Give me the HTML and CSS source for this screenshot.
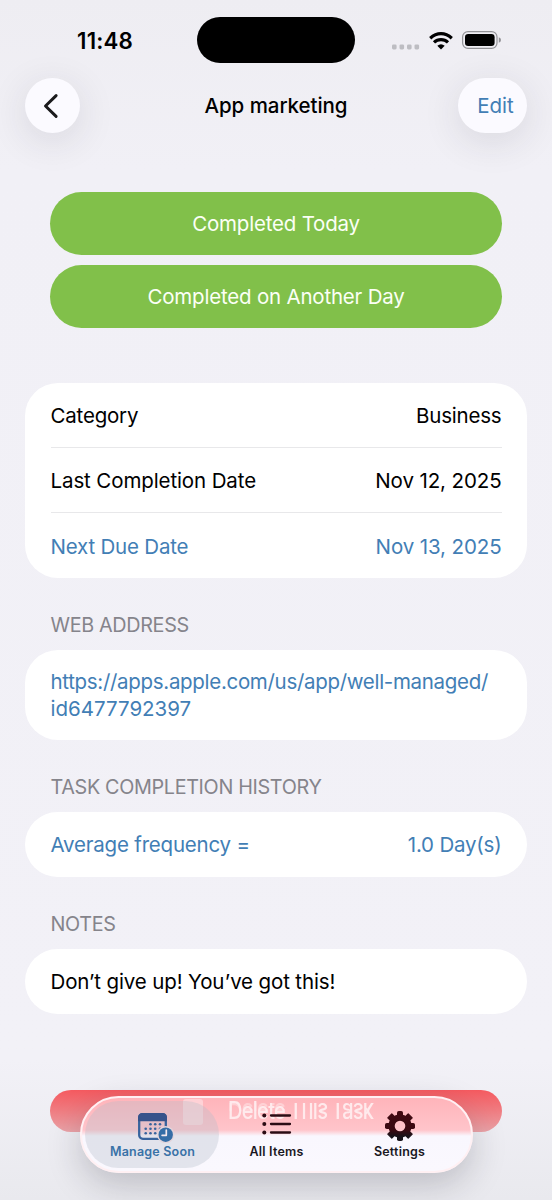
FILE: index.html
```html
<!DOCTYPE html>
<html lang="en">
<head>
<meta charset="utf-8">
<title>App marketing</title>
<link rel="stylesheet" href="styles.css">
</head>
<body>
<div class="screen">
  <div class="status">
    <span class="time">11:48</span>
    <div class="island"></div>
    <div class="indicators">
      <svg class="signal" width="28" height="6" viewBox="0 0 28 6" fill="#bdbdc2"><rect x="0" y=".4" width="4.6" height="5" rx="1.4"/><rect x="7.5" y=".4" width="4.6" height="5" rx="1.4"/><rect x="15" y=".4" width="4.6" height="5" rx="1.4"/><rect x="22.5" y=".4" width="4.6" height="5" rx="1.4"/></svg>
      <svg class="wifi" width="24" height="18" viewBox="0 0 24 18"><g fill="none" stroke="#000" stroke-width="3.2"><path d="M1.2 6.2Q6.2 1.7 12 1.7T22.8 6.2"/><path d="M5 10.4Q8 7.6 12 7.6T19 10.4"/></g><path d="M8.3 13.8Q12 10.8 15.7 13.8L12 17.6Z"/></svg>
      <svg class="battery" width="40" height="18" viewBox="0 0 40 18"><rect x=".6" y=".6" width="34.4" height="16.8" rx="5.4" fill="none" stroke="#929296" stroke-width="1.2"/><rect x="3" y="3" width="29.6" height="12" rx="3.2"/><path d="M36.8 6.2Q39 7 39 9T36.8 11.8Z" fill="#929296"/></svg>
    </div>
  </div>
  <header class="nav">
    <button class="glass back" aria-label="Back"><svg width="16" height="26" viewBox="0 0 16 26" fill="none" stroke="#1a1a1c" stroke-width="3" stroke-linecap="round" stroke-linejoin="round"><path d="M13.1 2.6 2.5 13 13.1 23.4"/></svg></button>
    <h1 class="title">App marketing</h1>
    <button class="glass edit"><span>Edit</span></button>
  </header>
  <main class="content">
    <div class="actions">
      <button class="done">Completed Today</button>
      <button class="done">Completed on Another Day</button>
    </div>
    <section class="card details">
      <div class="row"><span>Category</span><span>Business</span></div>
      <div class="row"><span class="wide">Last Completion Date</span><span class="wide">Nov 12, 2025</span></div>
      <div class="row blue"><span>Next Due Date</span><span class="wide">Nov 13, 2025</span></div>
    </section>
    <h2 class="label">WEB ADDRESS</h2>
    <section class="card web blue"><a class="url">https://apps.apple.com/us/app/well-managed/<br><span class="digits">id6477792397</span></a></section>
    <h2 class="label">TASK COMPLETION HISTORY</h2>
    <section class="card"><div class="row blue"><span>Average frequency =</span><span>1.0 Day(s)</span></div></section>
    <h2 class="label">NOTES</h2>
    <section class="card"><div class="row"><span class="note">Don’t give up! You’ve got this!</span></div></section>
    <div class="delete"></div>
  </main>
  <nav class="tabs">
    <div class="ghost">
      <i class="ghost-icon"></i>
      <div class="ghost-text">
        <span class="word whole" data-word="Delete"><span>Delete</span></span>
        <span class="word" data-word="This"><span>This</span></span>
        <span class="word" data-word="Task"><span>Task</span></span>
      </div>
    </div>
    <div class="tab active">
      <svg class="calendar" width="37" height="30" viewBox="0 0 37 30"><rect x="1.2" y="1.2" width="26.6" height="24.6" rx="3.6" fill="none" stroke="#37639d" stroke-width="2.3"/><path d="M0 8.3V4.5Q0 0 4.5 0h20Q29 0 29 4.5v3.8Z" fill="#36538b"/><g fill="#37639d"><circle cx="12.5" cy="11.2" r="1.3"/><circle cx="17.2" cy="11.2" r="1.3"/><circle cx="22" cy="11.2" r="1.3"/><circle cx="7.7" cy="15.7" r="1.3"/><circle cx="12.5" cy="15.7" r="1.3"/><circle cx="17.2" cy="15.7" r="1.3"/><circle cx="22" cy="15.7" r="1.3"/><circle cx="7.7" cy="20.3" r="1.3"/><circle cx="12.5" cy="20.3" r="1.3"/><circle cx="17.2" cy="20.3" r="1.3"/></g><circle cx="27.7" cy="21.7" r="8.6" fill="#e3d5dc"/><circle cx="27.7" cy="21.7" r="7.2" fill="#356da6"/><path d="M28.3 17v5.3h-4.2" fill="none" stroke="#f3e8ed" stroke-width="1.7" stroke-linecap="round" stroke-linejoin="round"/></svg>
      <span>Manage Soon</span>
    </div>
    <div class="tab">
      <svg width="30" height="30" viewBox="0 0 30 30"><g stroke="#2b0c14" stroke-width="2.3" stroke-linecap="round"><path d="M9 4.5h19M9 13h19M9 21.5h19"/></g><g fill="#2b0c14"><circle cx="2.3" cy="4.5" r="2"/><circle cx="2.3" cy="13" r="2"/><circle cx="2.3" cy="21.5" r="2"/></g></svg>
      <span>All Items</span>
    </div>
    <div class="tab">
      <svg width="30" height="30" viewBox="-15 -15 30 30"><defs><linearGradient id="g" gradientUnits="userSpaceOnUse" x1="0" y1="-15" x2="0" y2="15"><stop offset="0" stop-color="#400910"/><stop offset=".65" stop-color="#380a12"/><stop offset=".85" stop-color="#17131a"/></linearGradient><mask id="h" maskUnits="userSpaceOnUse" x="-15" y="-15" width="30" height="30"><rect x="-15" y="-15" width="30" height="30" fill="#fff"/><circle r="5.3" fill="#000"/></mask></defs><g mask="url(#h)"><g fill="url(#g)"><circle r="11.6"/><rect x="-3" y="-15" width="6" height="30" rx="1.8"/><rect x="-15" y="-3" width="30" height="6" rx="1.8"/><path d="M-12.2-8.2-8.2-12.2 12.2 8.2 8.2 12.2ZM8.2-12.2 12.2-8.2-8.2 12.2-12.2 8.2Z" stroke="url(#g)" stroke-width="1.2" stroke-linejoin="round"/></g></g></svg>
      <span>Settings</span>
    </div>
  </nav>
</div>
</body>
</html>
```
FILE: styles.css
```css
* { box-sizing: border-box; }
body { margin: 0; font-family: Inter, "Liberation Sans", sans-serif; color: #000; background: #f2f1f7; }
button { border: 0; padding: 0; font: inherit; }
h1, h2 { margin: 0; font-weight: 400; }
.screen { position: relative; width: 552px; height: 1200px; overflow: hidden; background: linear-gradient(#eeedf2, #f1f0f6 170px, #f2f1f7 1060px, #e9e9ee); }

.status { display: grid; grid-template-columns: 197px 158px 1fr; height: 78px; padding-top: 17px; }
.time { padding: 9px 0 0 77px; font-size: 22.3px; line-height: 30px; font-weight: 600; letter-spacing: .2px; }
.island { height: 46px; border-radius: 23px; background: #000; }
.indicators { display: flex; align-items: flex-start; padding: 14px 0 0 37px; }
.signal { margin: 13px 8.5px 0 0; }
.wifi { margin: .6px 9px 0 0; }

.nav { display: grid; grid-template-columns: 55px 1fr 69px; height: 55px; padding: 0 25px; align-items: center; }
.glass { height: 55px; background: #fbfaff; border-radius: 28px; box-shadow: 0 8px 38px rgba(40,40,55,.12); display: flex; align-items: center; justify-content: center; }
.edit { padding-left: 6px; color: #427eb5; font-size: 20.5px; letter-spacing: 0; }
.back svg { margin-right: 3px; }
.title { text-align: center; margin-left: 14px; font-size: 20.5px; font-weight: 500; letter-spacing: -.05px; }

.content { padding: 59px 25px 0; font-size: 20.5px; letter-spacing: -.2px; }
.actions { padding: 0 25px; display: grid; gap: 10px; margin-bottom: 55px; }
.done { height: 63px; border-radius: 32px; background: #81c04a; color: #fbfff5; letter-spacing: -.2px; }
.card { background: #fff; border-radius: 33px; padding: 0 25.5px; }
.row { height: 65px; display: flex; align-items: center; justify-content: space-between; }
.details { height: 195px; }
.details .row + .row { height: 66px; margin-top: -1px; border-top: 1.5px solid #e8e8ea; }
.details .row:nth-child(3) { padding-top: 1px; }
.wide { letter-spacing: -.11px; }
.blue { color: #427eb5; }
.label { margin: 34px 0 11px 25.5px; height: 27px; line-height: 27px; font-size: 19.8px; color: #85848b; letter-spacing: -.34px; }
.web { height: 90px; padding-top: 18px; line-height: 27.4px; }
.url { letter-spacing: -.31px; }
.digits { letter-spacing: 0; }
.note { letter-spacing: -.14px; }
.delete { margin: 76px 25px 0; height: 42px; border-radius: 22px; background: linear-gradient(#f55a60, #f0797e 45%, #eaa3a8); }

.tabs { position: absolute; left: 80px; top: 1096px; width: 393px; height: 77px; border: 2px solid #fff0f3; border-radius: 39px; overflow: hidden; background: linear-gradient(#ffb4ba, #ffc4ca 32px, #f9f7fe 38px, #faf8fe); display: grid; grid-template-columns: 137px 109px 139px; padding-left: 3px; box-shadow: 0 12px 34px rgba(30,30,45,.22); }
.tab { position: relative; display: flex; flex-direction: column; align-items: center; padding-top: 13px; font-size: 12.5px; font-weight: 600; letter-spacing: .2px; color: #19171e; }
.tab svg { height: 30px; }
.tab span { line-height: 20px; margin-top: 1px; }
.tab:last-child { padding-right: 2px; }
.active { margin: 3px 3px 3px 0; padding: 12px 0 0 1px; border-radius: 34px; background: rgba(180,188,199,.33); color: #3972a7; }
.active span { margin-top: -1px; }
.calendar { margin-left: 7px; }

/* Button label seen refracted through the glass bar */
.ghost { position: absolute; left: 101px; top: 1px; display: flex; align-items: center; gap: 25px; filter: blur(.6px); color: rgba(255,236,238,.95); }
.ghost-icon { width: 20px; height: 26px; border-radius: 3px; background: rgba(255,225,228,.65); }
.ghost-text { display: flex; gap: 4px; font-size: 20px; font-weight: 500; line-height: 24px; letter-spacing: -.7px; transform: translateY(-1px) scaleY(1.2); }
.word { position: relative; }
.word > span, .word::before { display: block; margin: 0; clip-path: inset(12px -2px 0 -2px); }
.word::before { content: attr(data-word); position: absolute; left: 0; top: 0; transform: scaleY(-1); }
.whole > span { clip-path: none; }
.whole::before { opacity: .5; }
```
